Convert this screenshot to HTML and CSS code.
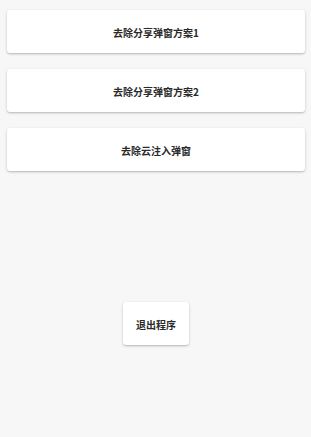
FILE: index.html
```html
<!DOCTYPE html>
<html>
<head>
<meta charset="utf-8">
<link rel="stylesheet" href="styles.css">
</head>
<body>
<div class="page">
  <div class="list">
    <button class="btn wide">去除分享弹窗方案1</button>
    <button class="btn wide">去除分享弹窗方案2</button>
    <button class="btn wide">去除云注入弹窗</button>
  </div>
  <div class="exit-row">
    <button class="btn exit">退出程序</button>
  </div>
</div>
</body>
</html>
```
FILE: styles.css
```css
html, body {
  margin: 0;
  padding: 0;
  background: #f7f7f7;
  width: 311px;
  height: 437px;
  overflow: hidden;
}
.page {
  display: flex;
  flex-direction: column;
  padding: 10px 6px 0 7px;
}
.list {
  display: flex;
  flex-direction: column;
  gap: 16px;
}
.btn {
  border: none;
  background: #ffffff;
  border-radius: 3px;
  box-shadow: 0 1px 3px rgba(0, 0, 0, 0.2), 0 1px 1px rgba(0, 0, 0, 0.08);
  font-family: "Noto Sans CJK SC", "Noto Sans", sans-serif;
  font-size: 10px;
  font-weight: 700;
  color: #2a2a2a;
  padding: 1px 0 0 0;
  margin: 0;
}
.wide {
  height: 43px;
  width: 100%;
}
.exit-row {
  display: flex;
  justify-content: center;
  margin-top: 131px;
}
.exit {
  width: 66px;
  height: 43px;
}
```
